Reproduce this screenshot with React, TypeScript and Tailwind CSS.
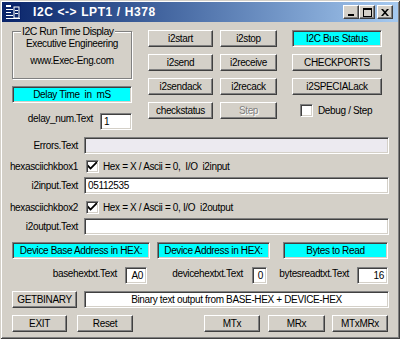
import React from 'react';

const raised =
  'border border-t-white border-l-white border-r-[#404040] border-b-[#404040] shadow-[inset_-1px_-1px_0_#808080]';
const sunken =
  'border border-t-[#808080] border-l-[#808080] border-r-white border-b-white shadow-[inset_1px_1px_0_#404040,inset_-1px_-1px_0_#D4D0C8]';

const Btn = ({ label, w, disabled }: { label: string; w?: string; disabled?: boolean }) => (
  <div
    className={`${raised} ${w ?? ''} h-[17px] bg-[#D4D0C8] flex items-center justify-center ${
      disabled ? 'text-[#808080] [text-shadow:1px_1px_0_#fff]' : 'text-black'
    }`}
  >
    {label}
  </div>
);

const Cyan = ({ label, w }: { label: string; w: string }) => (
  <div className={`${sunken} ${w} h-[17px] bg-[#00FFFF] flex items-center justify-center text-black whitespace-pre`}>
    {label}
  </div>
);

const Check = ({ checked }: { checked?: boolean }) => (
  <div className={`${sunken} w-[13px] h-[13px] bg-white flex items-center justify-center shrink-0`}>
    {checked && (
      <svg width="9" height="9" viewBox="0 0 7 7">
        <path d="M0 2 L0 4 L2 6 L7 1 L7 -1 L2 4 Z" fill="#000" />
      </svg>
    )}
  </div>
);

const Field = ({ w, text, bg, align }: { w: string; text?: string; bg?: string; align?: string }) => (
  <div className={`${sunken} ${w} h-[17px] ${bg ?? 'bg-white'} flex items-center px-[3px] ${align ?? ''}`}>
    {text}
  </div>
);

const LabelRow = ({ label, children, h }: { label: string; children: React.ReactNode; h: string }) => (
  <div className={`flex items-center ${h}`}>
    <div className="w-[78px] text-right whitespace-nowrap">{label}</div>
    <div className="ml-[6px] flex items-center">{children}</div>
  </div>
);

const AppIcon = () => (
  <svg width="16" height="16" viewBox="0 0 16 16">
    <rect x="0" y="0" width="16" height="16" fill="#0A246A" />
    <rect x="1" y="1" width="5" height="2" fill="#fff" />
    <rect x="1" y="5" width="7" height="1" fill="#fff" />
    <rect x="1" y="8" width="5" height="1" fill="#fff" />
    <rect x="1" y="11" width="7" height="1" fill="#fff" />
    <rect x="1" y="14" width="14" height="1" fill="#fff" />
    <rect x="9" y="3" width="5" height="11" fill="none" stroke="#fff" strokeWidth="1" />
    <rect x="10" y="6" width="3" height="1" fill="#fff" />
    <rect x="10" y="9" width="3" height="1" fill="#fff" />
  </svg>
);

const CtlBtn = ({ children }: { children: React.ReactNode }) => (
  <div className={`${raised} w-[16px] h-[14px] bg-[#D4D0C8] flex items-center justify-center`}>{children}</div>
);

export default function App() {
  return (
    <div className="w-[400px] h-[339px] bg-[#D4D0C8] overflow-hidden shadow-[inset_1px_1px_0_#D4D0C8,inset_-1px_-1px_0_#404040,inset_2px_2px_0_#fff,inset_-2px_-2px_0_#808080] font-['Liberation_Sans',Arial,sans-serif] text-[10px] tracking-[-0.35px] text-black leading-[12px]">
      {/* title bar */}
      <div className="mx-[2px] mt-[2px] h-[20px] bg-linear-to-r from-[#0A246A] to-[#A6CAF0] flex items-center pl-[3px] pr-[5px]">
        <AppIcon />
        <div className="ml-[12px] text-white font-bold text-[12px] tracking-[0.6px] whitespace-nowrap">
          I2C &lt;-&gt; LPT1 / H378
        </div>
        <div className="ml-auto flex items-center">
          <CtlBtn>
            <svg width="8" height="8" viewBox="0 0 8 8">
              <rect x="1" y="6" width="6" height="2" fill="#000" />
            </svg>
          </CtlBtn>
          <CtlBtn>
            <svg width="9" height="9" viewBox="0 0 9 9">
              <rect x="0.5" y="0.5" width="8" height="8" fill="none" stroke="#000" />
              <rect x="0" y="0" width="9" height="2" fill="#000" />
            </svg>
          </CtlBtn>
          <div className="ml-[2px]">
            <CtlBtn>
              <svg width="8" height="7" viewBox="0 0 8 7">
                <path d="M0 0 L2 0 L4 2.2 L6 0 L8 0 L5 3.5 L8 7 L6 7 L4 4.8 L2 7 L0 7 L3 3.5 Z" fill="#000" />
              </svg>
            </CtlBtn>
          </div>
        </div>
      </div>

      {/* top section */}
      <div className="flex items-start mt-[3px]">
        <div className="ml-[12px] w-[120px] flex flex-col">
          <div className="mt-[6px] h-[48px] border border-[#808080] shadow-[1px_1px_0_#fff,inset_1px_1px_0_#fff] flex flex-col items-center">
            <div className="self-start ml-[8px] -mt-[7px] px-[1px] bg-[#D4D0C8] text-[10.5px] leading-[13px] tracking-[-0.5px] whitespace-nowrap">
              I2C Run Time Display
            </div>
            <div className="whitespace-nowrap">Executive Engineering</div>
            <div className="mt-[5px] whitespace-nowrap">www.Exec-Eng.com</div>
          </div>
          <div className="mt-[7px]">
            <Cyan label="Delay Time  in  mS" w="w-[120px]" />
          </div>
          <div className="mt-[10px] flex items-center justify-end h-[17px]">
            <div className="-mt-[5px] whitespace-nowrap">delay_num.Text</div>
            <div className="ml-[7px]">
              <Field w="w-[32px]" text="1" />
            </div>
          </div>
        </div>

        <div className="ml-[16px] pt-[5px] grid grid-cols-[65px_64px_90px] gap-y-[7px]">
          <Btn label="i2start" />
          <div className="ml-[7px]"><Btn label="i2stop" /></div>
          <div className="ml-[15px]"><Cyan label="I2C Bus Status" w="w-[90px]" /></div>

          <Btn label="i2send" />
          <div className="ml-[7px]"><Btn label="i2receive" /></div>
          <div className="ml-[15px]"><Btn label="CHECKPORTS" w="w-[90px]" /></div>

          <Btn label="i2sendack" />
          <div className="ml-[7px]"><Btn label="i2recack" /></div>
          <div className="ml-[15px]"><Btn label="i2SPECIALack" w="w-[90px]" /></div>

          <Btn label="checkstatus" />
          <div className="ml-[7px]"><Btn label="Step" disabled /></div>
          <div className="ml-[23px] flex items-center h-[17px]">
            <Check />
            <span className="ml-[5px] whitespace-nowrap">Debug / Step</span>
          </div>
        </div>
      </div>

      {/* text rows */}
      <div className="mt-[7px]">
        <LabelRow label="Errors.Text" h="h-[17px]">
          <Field w="w-[305px]" bg="bg-[#ECEAF0]" />
        </LabelRow>
      </div>
      <div className="mt-[6px]">
        <LabelRow label="hexasciichkbox1" h="h-[13px]">
          <div className="ml-[2px] flex items-center">
            <Check checked />
            <span className="ml-[4px] whitespace-pre">Hex = X / Ascii = 0,  I/O  i2input</span>
          </div>
        </LabelRow>
      </div>
      <div className="mt-[4px]">
        <LabelRow label="i2input.Text" h="h-[17px]">
          <Field w="w-[305px]" text="05112535" />
        </LabelRow>
      </div>
      <div className="mt-[7px]">
        <LabelRow label="hexasciichkbox2" h="h-[13px]">
          <div className="ml-[2px] flex items-center">
            <Check checked />
            <span className="ml-[4px] whitespace-pre">Hex = X / Ascii = 0, I/O  i2output</span>
          </div>
        </LabelRow>
      </div>
      <div className="mt-[4px]">
        <LabelRow label="i2output.Text" h="h-[17px]">
          <Field w="w-[305px]" />
        </LabelRow>
      </div>

      {/* cyan labels */}
      <div className="mt-[7px] ml-[12px] flex">
        <Cyan label="Device Base Address in HEX:" w="w-[138px]" />
        <div className="ml-[7px]"><Cyan label="Device Address in HEX:" w="w-[113px]" /></div>
        <div className="ml-[13px]"><Cyan label="Bytes to Read" w="w-[105px]" /></div>
      </div>

      {/* hex inputs */}
      <div className="mt-[8px] flex items-center h-[17px]">
        <div className="w-[117px] text-right -mt-[4px] whitespace-nowrap">basehextxt.Text</div>
        <div className="ml-[8px]"><Field w="w-[22px]" text="A0" align="justify-end" /></div>
        <div className="w-[96px] text-right -mt-[4px] whitespace-nowrap">devicehextxt.Text</div>
        <div className="ml-[9px]"><Field w="w-[15px]" text="0" align="justify-end" /></div>
        <div className="w-[82px] text-right -mt-[4px] whitespace-nowrap">bytesreadtxt.Text</div>
        <div className="ml-[8px]"><Field w="w-[31px]" text="16" align="justify-end" /></div>
      </div>

      {/* getbinary */}
      <div className="mt-[7px] ml-[12px] flex">
        <Btn label="GETBINARY" w="w-[65px]" />
        <div className="ml-[7px]">
          <Field w="w-[305px]" text="Binary text output from BASE-HEX + DEVICE-HEX" align="justify-center" />
        </div>
      </div>

      {/* bottom buttons */}
      <div className="mt-[7px] ml-[12px] flex">
        <Btn label="EXIT" w="w-[55px]" />
        <div className="ml-[10px]"><Btn label="Reset" w="w-[56px]" /></div>
        <div className="ml-[71px]"><Btn label="MTx" w="w-[56px]" /></div>
        <div className="ml-[8px]"><Btn label="MRx" w="w-[57px]" /></div>
        <div className="ml-[7px]"><Btn label="MTxMRx" w="w-[56px]" /></div>
      </div>
    </div>
  );
}
